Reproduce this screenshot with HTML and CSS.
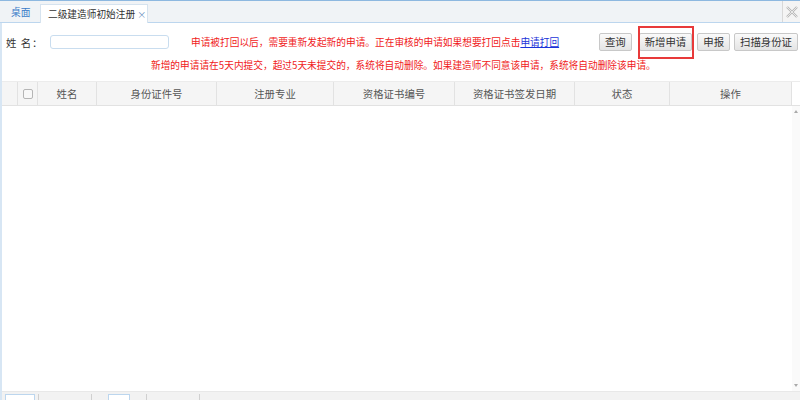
FILE: index.html
```html
<!DOCTYPE html>
<html>
<head>
<meta charset="utf-8">
<link rel="stylesheet" href="styles.css">
</head>
<body>
<div class="tabs">
  <div class="tab home">桌面</div>
  <div class="tab active">二级建造师初始注册 <span class="x">×</span></div>
  <div class="spacer"></div>
  <div class="closeall"><svg width="14" height="14" viewBox="0 0 14 14"><path d="M2 2 L12 12 M12 2 L2 12" stroke="#b8b8b8" stroke-width="2.4" fill="none"/><path d="M2 2 L12 12 M12 2 L2 12" stroke="#f4f4f4" stroke-width="0.8" fill="none"/></svg></div>
</div>
<div class="main">
  <div class="toolbar">
    <div class="row1">
      <span class="label">姓 名：</span>
      <input class="inp" type="text">
      <span class="red msg1">申请被打回以后，需要重新发起新的申请。正在审核的申请如果想要打回点击<a class="link">申请打回</a></span>
      <div class="btns">
        <span class="btn">查询</span>
        <span class="btn hl">新增申请</span>
        <span class="btn">申报</span>
        <span class="btn">扫描身份证</span>
      </div>
    </div>
    <div class="red msg2">新增的申请请在5天内提交，超过5天未提交的，系统将自动删除。如果建造师不同意该申请，系统将自动删除该申请。</div>
  </div>
  <div class="grid">
    <div class="head">
      <div class="c c0"></div>
      <div class="c c1"><span class="cb"></span></div>
      <div class="c c2">姓名</div>
      <div class="c c3">身份证件号</div>
      <div class="c c4">注册专业</div>
      <div class="c c5">资格证书编号</div>
      <div class="c c6">资格证书签发日期</div>
      <div class="c c7">状态</div>
      <div class="c c8">操作</div>
      <div class="c c9"></div>
    </div>
    <div class="body">
      <div class="empty"></div>
      <div class="sbar"><span class="arr up"></span><span class="arr dn"></span></div>
    </div>
    <div class="pager">
      <span class="pbox"></span><span class="psep"></span><span class="pgap"></span><span class="psep"></span><span class="pbox small"></span><span class="psep"></span><span class="pgap"></span><span class="psep"></span>
    </div>
  </div>
</div>
</body>
</html>
```
FILE: styles.css
```css
* { box-sizing: border-box; }
html, body { margin: 0; padding: 0; }
body {
  width: 800px; height: 400px; overflow: hidden;
  font-family: "Noto Sans CJK SC", "Noto Sans", sans-serif;
  font-size: 10px; color: #333; background: #fff;
  white-space: nowrap;
}
.tabs {
  height: 23px; display: flex; align-items: flex-end;
  background: #f0f3f6;
  border-top: 1px solid #8db8e0;
  border-bottom: 1px solid #bcd6ee;
}
.tab { height: 19px; line-height: 18px; font-size: 9.7px; }
.home { color: #3a7bc8; padding: 0 10px 0 11px; width: 40px; }
.active {
  background: #fff; border: 1px solid #d6e3ef; border-bottom: none;
  padding: 0 0 0 7px; color: #333; height: 19px; margin-bottom: -1px;
  width: 108px;
}
.active .x { color: #6a8fc0; font-size: 9px; }
.spacer { flex: 1; }
.closeall {
  width: 18px; height: 21px; display: flex; align-items: center; justify-content: center;
  border-left: 1px solid #d8d8d8; background: #f4f4f4;
}
.main {
  border-left: 2px solid #d7e6f4;
  height: 377px; display: flex; flex-direction: column;
}
.row1 { display: flex; align-items: center; height: 22px; margin-top: 8px; }
.label { margin-left: 4px; width: 44px; color: #333; font-size: 10.4px; letter-spacing: 1px; }
.inp {
  width: 119px; height: 14px; border: 1px solid #c9ddef; border-radius: 3px;
  margin: 0; padding: 0; outline: none;
}
.red { color: #f01a1a; font-size: 9.7px; }
.msg1 { margin-left: 22px; }
.link { color: #1a33d9; text-decoration: underline; }
.btns { margin-left: auto; display: flex; gap: 4px; margin-right: 2px; }
.btn {
  height: 18px; line-height: 16px; padding: 0 5px; font-size: 10.4px;
  border: 1px solid #c8c8c8; border-radius: 2px;
  background: linear-gradient(#fafafa, #e4e4e4); color: #333;
}
.btn.hl { position: relative; margin-left: 3px; margin-right: 1px; }
.btn.hl::after {
  content: ""; position: absolute; left: -2px; right: -3px; top: -8px; bottom: -9px;
  border: 2px solid #e83a3a;
}
.msg2 { padding-left: 149px; height: 16px; line-height: 16px; margin-top: 4px; }
.grid { flex: 1; display: flex; flex-direction: column; margin-top: 8px; }
.head {
  height: 25px; display: flex; background: #f5f5f5;
  border-top: 1px solid #ececec; border-bottom: 1px solid #e2e2e2;
}
.c {
  border-right: 1px solid #e2e2e2; display: flex; align-items: center; justify-content: center;
  color: #555; font-size: 10.4px;
}
.c0 { width: 16px; }
.c1 { width: 20px; }
.c2 { width: 59px; }
.c3 { width: 120px; }
.c4 { width: 117px; }
.c5 { width: 121px; }
.c6 { width: 120px; }
.c7 { width: 95px; }
.c8 { width: 122px; }
.c9 { flex: 1; border-right: none; background: #fff; }
.cb { width: 10px; height: 10px; border: 1px solid #b5b5b5; border-radius: 2px; background: #f8f8f8; }
.body { flex: 1; display: flex; }
.empty { flex: 1; }
.sbar { width: 8px; position: relative; background: #fafafa; }
.arr { position: absolute; left: 2px; width: 0; height: 0; border-left: 2px solid transparent; border-right: 2px solid transparent; }
.arr.up { top: 4px; border-bottom: 3px solid #aaa; }
.arr.dn { bottom: 4px; border-top: 3px solid #aaa; }
.pager {
  height: 9px; background: #f2f2f2; border-top: 1px solid #e8e8e8;
  display: flex; align-items: flex-end; padding-left: 3px;
}
.pbox { width: 30px; height: 6px; border: 1px solid #bcd6ee; border-bottom: none; background: #fff; }
.pbox.small { width: 22px; margin: 0 13px; }
.psep { width: 1px; height: 6px; background: #d0d0d0; margin: 0 3px; }
.pgap { width: 46px; }
```
